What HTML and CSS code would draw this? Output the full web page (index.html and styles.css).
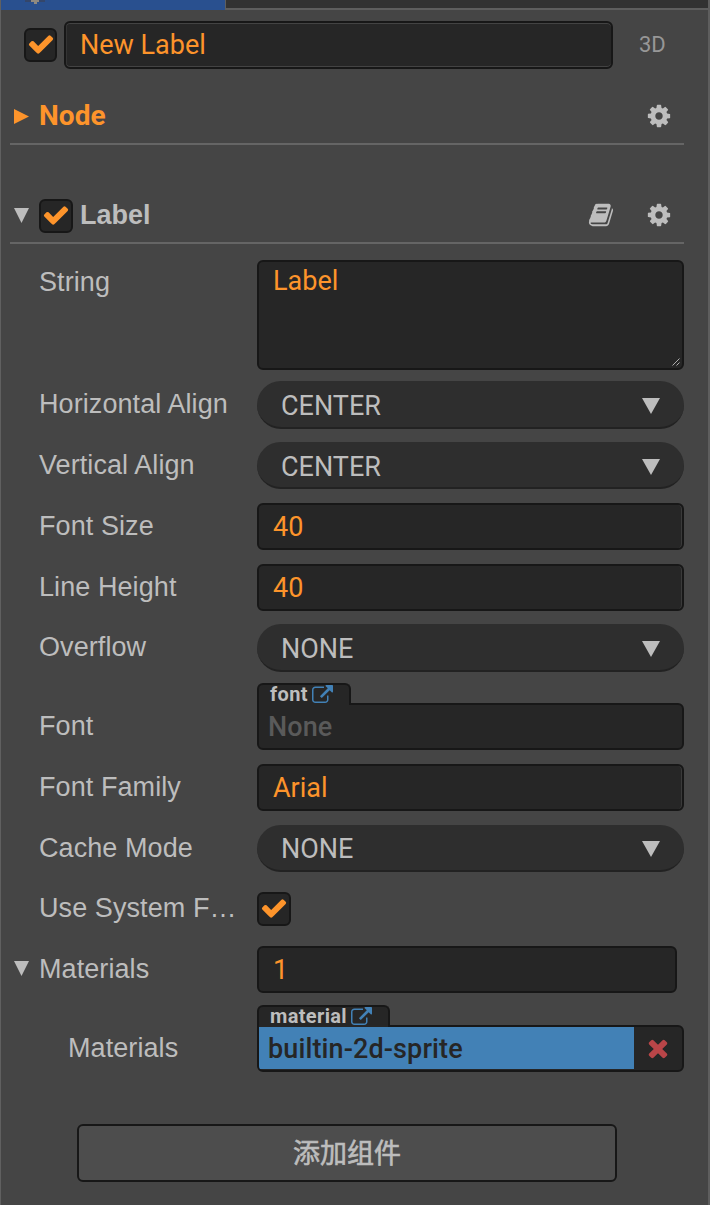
FILE: index.html
```html
<!DOCTYPE html>
<html lang="zh-CN">
<head>
<meta charset="utf-8">
<title>Inspector</title>
<link rel="stylesheet" href="styles.css">
</head>
<body>
<svg class="sprite" aria-hidden="true">
  <symbol id="check" viewBox="0 0 1792 1792"><path d="M1671 566q0 40-28 68l-724 724-136 136q-28 28-68 28t-68-28l-136-136-362-362q-28-28-28-68t28-68l136-136q28-28 68-28t68 28l294 295 656-657q28-28 68-28t68 28l136 136q28 28 28 68z"/></symbol>
  <symbol id="cog" viewBox="0 0 1792 1792"><path d="M1152 896q0-106-75-181t-181-75-181 75-75 181 75 181 181 75 181-75 75-181zm512-109v222q0 12-8 23t-20 13l-185 28q-19 54-39 91 35 50 107 138 10 12 10 25t-9 23q-27 37-99 108t-94 71q-12 0-26-9l-138-108q-44 23-91 38-16 136-29 186-7 28-36 28h-222q-14 0-24.5-8.5t-11.5-21.5l-28-184q-49-16-90-37l-141 107q-10 9-25 9-14 0-25-11-126-114-165-168-7-10-7-23 0-12 8-23 15-21 51-66.5t54-70.5q-27-50-41-99l-183-27q-13-2-21-12.5t-8-23.5v-222q0-12 8-23t19-13l186-28q14-46 39-92-40-57-107-138-10-12-10-24 0-10 9-23 26-36 98.5-107.5t94.5-71.5q13 0 26 10l138 107q44-23 91-38 16-136 29-186 7-28 36-28h222q14 0 24.5 8.5t11.5 21.5l28 184q49 16 90 37l142-107q9-9 24-9 13 0 25 10 129 119 165 170 7 8 7 22 0 12-8 23-15 21-51 66.5t-54 70.5q26 50 41 98l183 28q13 2 21 12.5t8 23.5z"/></symbol>
  <symbol id="book" viewBox="0 0 1792 1792"><path d="M1703 478q40 57 18 129l-275 906q-19 64-76.5 107.5t-122.5 43.5h-923q-77 0-148.5-53.5t-99.5-131.5q-24-67-2-127 0-4 3-27t4-37q1-8-3-21.5t-3-19.5q2-11 8-21t16.5-23.5 16.5-23.5q23-38 45-91.5t30-91.5q3-10 .5-30t-.5-28q3-11 17-28t17-23q21-36 42-92t25-90q1-9-2.5-32t.5-28q4-13 22-30.5t22-22.5q19-26 42.5-84.5t27.5-96.5q1-8-3-25.5t-2-26.5q2-8 9-18t18-23 17-21q8-12 16.5-30.5t15-35 16-36 19.5-32 26.5-23.5 36-11.5 47.5 5.5l-1 3q38-9 51-9h761q74 0 114 56t18 130l-274 906q-36 119-71.5 153.5t-128.5 34.5h-869q-27 0-38 15-11 16-1 43 24 70 144 70h923q29 0 56-15.5t35-41.5l300-987q7-22 5-57 38 15 59 43zm-1064 2q-4 13 2 22.5t20 9.5h608q13 0 25.5-9.5t16.5-22.5l21-64q4-13-2-22.5t-20-9.5h-608q-13 0-25.5 9.5t-16.5 22.5zm-83 256q-4 13 2 22.5t20 9.5h608q13 0 25.5-9.5t16.5-22.5l21-64q4-13-2-22.5t-20-9.5h-608q-13 0-25.5 9.5t-16.5 22.5z"/></symbol>
  <symbol id="link" viewBox="0 0 1792 1792"><path d="M1408 928v320q0 119-84.5 203.5t-203.5 84.5h-832q-119 0-203.5-84.5t-84.5-203.5v-832q0-119 84.5-203.5t203.5-84.5h704q14 0 23 9t9 23v64q0 14-9 23t-23 9h-704q-66 0-113 47t-47 113v832q0 66 47 113t113 47h832q66 0 113-47t47-113v-320q0-14 9-23t23-9h64q14 0 23 9t9 23zm384-864v512q0 26-19 45t-45 19-45-19l-176-176-652 652q-10 10-23 10t-23-10l-114-114q-10-10-10-23t10-23l652-652-176-176q-19-19-19-45t19-45 45-19h512q26 0 45 19t19 45z"/></symbol>
  <symbol id="times" viewBox="0 0 1792 1792"><path d="M1490 1322q0 40-28 68l-136 136q-28 28-68 28t-68-28l-294-294-294 294q-28 28-68 28t-68-28l-136-136q-28-28-28-68t28-68l294-294-294-294q-28-28-28-68t28-68l136-136q28-28 68-28t68 28l294 294 294-294q28-28 68-28t68 28l136 136q28 28 28 68t-28 68l-294 294 294 294q28 28 28 68z"/></symbol>
  <symbol id="down" viewBox="0 0 18 16"><path d="M0 0h18L9 16z"/></symbol>
</svg>

<main class="panel">
  <div class="tabs">
    <div class="tab tab-active"><svg class="tab-icon" viewBox="0 0 20 4"><path class="tab-icon-edge" d="M0 0h20v2H0z"/><path d="M6 0h8v2h-2v2H9V2H6z"/></svg></div>
    <div class="tab-rest"></div>
  </div>

  <header class="node-name">
    <span class="checkbox"><svg><use href="#check"/></svg></span>
    <span class="input name-input">New Label</span>
    <span class="dim">3D</span>
  </header>

  <section class="head head-node">
    <svg class="fold" viewBox="0 0 15 15"><path d="M0 0L15 7.5 0 15z"/></svg>
    <h2 class="title">Node</h2>
    <svg class="tool"><use href="#cog"/></svg>
  </section>

  <section class="head head-label">
    <svg class="fold" viewBox="0 0 15 15"><path d="M0 0h15L7.5 15z"/></svg>
    <span class="checkbox"><svg><use href="#check"/></svg></span>
    <h2 class="title">Label</h2>
    <svg class="tool"><use href="#book"/></svg>
    <svg class="tool"><use href="#cog"/></svg>
  </section>

  <section class="props">
    <div class="row row-top">
      <span class="label">String</span>
      <div class="textarea"><span>Label</span><svg class="grip" viewBox="0 0 8 8"><path d="M.5 7.5l7-7M4.5 7.5l3-3"/></svg></div>
    </div>
    <div class="row"><span class="label">Horizontal Align</span><div class="select tall">CENTER<svg><use href="#down"/></svg></div></div>
    <div class="row"><span class="label">Vertical Align</span><div class="select">CENTER<svg><use href="#down"/></svg></div></div>
    <div class="row"><span class="label">Font Size</span><div class="input number">40</div></div>
    <div class="row"><span class="label">Line Height</span><div class="input number">40</div></div>
    <div class="row"><span class="label">Overflow</span><div class="select tall">NONE<svg><use href="#down"/></svg></div></div>
    <div class="row">
      <span class="label label-asset">Font</span>
      <div class="asset">
        <div class="asset-tag tag-font">font<svg><use href="#link"/></svg></div>
        <div class="asset-box"><span class="asset-value empty">None</span></div>
      </div>
    </div>
    <div class="row"><span class="label">Font Family</span><div class="input number">Arial</div></div>
    <div class="row"><span class="label">Cache Mode</span><div class="select low">NONE<svg><use href="#down"/></svg></div></div>
    <div class="row"><span class="label">Use System F…</span><span class="checkbox"><svg><use href="#check"/></svg></span></div>
    <div class="row row-fold">
      <svg class="fold" viewBox="0 0 15 15"><path d="M0 0h15L7.5 15z"/></svg>
      <span class="label">Materials</span><div class="input count">1</div>
    </div>
    <div class="row row-sub">
      <span class="label label-asset">Materials</span>
      <div class="asset">
        <div class="asset-tag tag-material">material<svg><use href="#link"/></svg></div>
        <div class="asset-box"><span class="asset-value filled">builtin-2d-sprite</span><span class="remove"><svg><use href="#times"/></svg></span></div>
      </div>
    </div>
  </section>

  <div class="add-button">添加组件</div>
</main>
</body>
</html>
```
FILE: styles.css
```css
* { box-sizing: border-box; }

body {
  margin: 0;
  background: #454545;
  color: #bdbdbd;
  font-family: Roboto, "Noto Sans CJK SC", sans-serif;
  font-size: 27px;
  line-height: 32px;
}

svg { display: block; flex: none; fill: currentColor; }
.sprite { position: absolute; width: 0; height: 0; }

.panel {
  width: 710px;
  height: 1205px;
  overflow: hidden;
  border-left: 1px solid #606060;
  border-right: 2px solid #5e5e5e;
}

.tabs { display: flex; height: 10px; margin-right: -2px; }
.tab-active { width: 224px; background: #29508f; padding-left: 24px; }
.tab-icon { width: 20px; height: 4px; fill: #8f8a80; }
.tab-icon-edge { fill: #34466a; }
.tab-rest {
  flex: 1;
  background: #323232;
  border-left: 1px solid #5e5e5e;
  border-bottom: 2px solid #5e5e5e;
}

.checkbox {
  display: flex;
  align-items: center;
  justify-content: center;
  flex: none;
  width: 34px;
  height: 34px;
  background: #262626;
  border: 2px solid #171717;
  border-radius: 6px;
  color: #fd942b;
}
.checkbox svg { width: 28px; height: 28px; margin-top: -2px; }

.input {
  height: 47px;
  padding: 6px 14px 0;
  background: #262626;
  border: 2px solid #171717;
  border-radius: 6px;
  color: #fd942b;
}

.node-name { display: flex; align-items: center; height: 70px; padding-left: 23px; }
.node-name .checkbox { width: 33px; }
.name-input {
  width: 549px;
  height: 48px;
  margin-left: 7px;
  padding-top: 6px;
  box-shadow: inset 0 1px #434343, inset 0 -1px #434343, inset 1px 0 #343434;
}
.dim { margin-left: 26px; color: #979797; font-size: 22px; }

.head {
  display: flex;
  align-items: center;
  width: 674px;
  margin-left: 9px;
  padding-left: 4px;
  padding-right: 12.5px;
  border-bottom: 2px solid #656565;
}
.head-node { height: 56px; margin-top: 9px; color: #fd942b; }
.head-label { height: 56px; margin-top: 43px; }
.fold { width: 15px; height: 15px; }
.head .checkbox { margin: 2px 7px 0 10px; }
.title { margin: 0 auto 0 0; font: bold 27px/32px "Liberation Sans", Arial, sans-serif; }
.head-node .title { margin-left: 10px; font-family: Roboto, sans-serif; font-size: 28px; letter-spacing: .1px; }
.tool { width: 26px; height: 26px; color: #bdbdbd; }
.tool + .tool { margin-left: 32px; }

.props {
  display: grid;
  grid-template-rows: 132px 58px 63px 59px 63px 58px 79px 63px 59px 62px 59px 79px;
  width: 683px;
}
.row { display: flex; align-items: center; padding-left: 38px; }
.row-top { align-items: flex-start; padding-top: 16px; }
.row-fold { padding-left: 13px; }
.row-fold .fold { margin-bottom: 2px; }
.row-fold .label { margin-left: 10px; }
.row-sub { padding-left: 67px; }
.row-sub .label { width: 189px; }
.label {
  flex: none;
  width: 218px;
  padding-bottom: 2px;
  white-space: nowrap;
  font-family: "Liberation Sans", Arial, sans-serif;
  letter-spacing: .08px;
}
.row-top .label { padding-top: 6px; }
.label-asset { padding-top: 20px; }

.textarea {
  display: flex;
  flex: 1;
  justify-content: space-between;
  align-items: flex-end;
  height: 110px;
  padding: 3px 2px 2px 14px;
  background: #262626;
  border: 2px solid #171717;
  border-radius: 6px;
  color: #fd942b;
}
.textarea span { align-self: flex-start; }
.grip { width: 8px; height: 8px; fill: none; stroke: #bdbdbd; stroke-width: .9; }

.select {
  display: flex;
  flex: 1;
  justify-content: space-between;
  height: 47px;
  padding: 9px 24px 0;
  background: #2e2e2e;
  border-bottom: 2px solid #222;
  border-radius: 24px;
}
.select.tall { height: 48px; }
.select.low { padding-top: 8px; }
.select svg { width: 18px; height: 16px; margin-top: 8px; }

.number { flex: 1; box-shadow: inset -1px 0 #3a3a3a; }
.count { width: 420px; }

.asset { flex: 1; }
.asset-tag {
  position: relative;
  display: flex;
  height: 22px;
  margin-bottom: -2px;
  padding-left: 11px;
  background: #262626;
  border: 2px solid #171717;
  border-bottom: 0;
  border-radius: 6px 6px 0 0;
  font: bold 20px/18px Roboto, sans-serif;
  letter-spacing: .35px;
}
.asset-tag svg { width: 21px; height: 21px; margin-left: auto; color: #4281b6; }
.tag-font { width: 94px; padding-right: 16px; }
.tag-material { width: 133px; padding-right: 16px; }
.asset-box {
  display: flex;
  height: 47px;
  overflow: hidden;
  background: #262626;
  border: 2px solid #171717;
  border-radius: 0 6px 6px 6px;
}
.asset-value { flex: 1; padding: 6px 9px; font-weight: 500; letter-spacing: .12px; }
.empty { color: #5a5a5a; }
.filled { margin-bottom: 1px; background: #4281b6; color: #262626; }
.remove { display: flex; align-items: center; justify-content: center; width: 48px; padding-bottom: 1px; color: #b94548; }
.remove svg { width: 28px; height: 28px; }

.add-button {
  width: 540px;
  height: 58px;
  margin: 46px 0 0 76px;
  padding-top: 10px;
  background: #4d4d4d;
  border: 2px solid #171717;
  border-radius: 6px;
  font-family: "Noto Sans CJK SC", sans-serif;
  -webkit-text-stroke: .6px #bdbdbd;
  text-align: center;
}
```
